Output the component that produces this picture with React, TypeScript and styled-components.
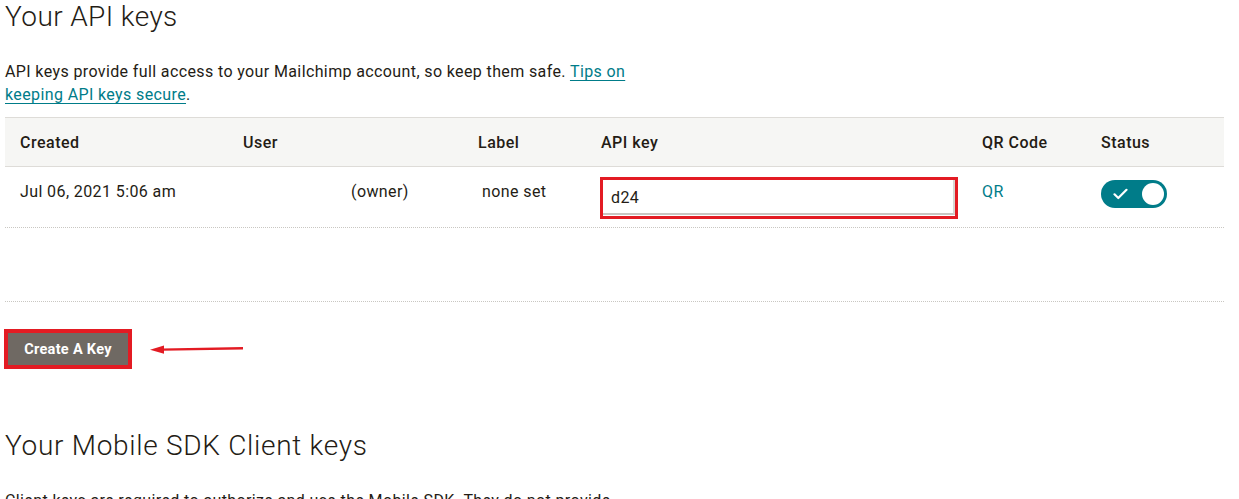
import styled, { createGlobalStyle } from 'styled-components';

const GlobalStyle = createGlobalStyle`
  body {
    margin: 0;
    background: #fff;
    font-family: Roboto, "Liberation Sans", Arial, sans-serif;
    color: #241c15;
  }
`;

const COLS = '223px 235px 123px 381px 119px 138px';

const Page = styled.div`
  padding-left: 5px;
  width: 1219px;
`;

const Title = styled.h1<{ $spacing?: number }>`
  margin: 0;
  font-size: 28px;
  line-height: 34px;
  font-weight: 300;
  letter-spacing: ${(p) => p.$spacing ?? 0.4}px;
  color: #241c15;
`;

const Intro = styled.p<{ $top: number }>`
  margin: ${(p) => p.$top}px 0 0;
  width: 640px;
  font-size: 16px;
  line-height: 23px;
  letter-spacing: 0.38px;
  color: #241c15;

  a {
    color: #007c89;
    text-decoration: underline;
    text-underline-offset: 3px;
  }
`;

const Table = styled.div`
  margin-top: 11px;
`;

const HeadRow = styled.div`
  display: grid;
  grid-template-columns: ${COLS};
  align-items: center;
  height: 48px;
  background: #f6f6f4;
  border-top: 1px solid #dedcd8;
  border-bottom: 1px solid #dedcd8;
`;

const HeadCell = styled.div`
  padding-left: 15px;
  font-size: 16px;
  font-weight: 500;
  letter-spacing: 0.5px;
  color: #241c15;
`;

const Row = styled.div<{ $h: number }>`
  display: grid;
  grid-template-columns: ${COLS};
  align-items: start;
  height: ${(p) => p.$h}px;
  border-bottom: 1px dotted #c9c7c2;
`;

const Cell = styled.div<{ $pad?: number }>`
  padding: 13px 0 0 ${(p) => p.$pad ?? 15}px;
  font-size: 16px;
  line-height: 24px;
  letter-spacing: 0.4px;
  color: #241c15;
`;

const KeyBox = styled.div`
  margin: 10px 0 0 14px;
  width: 352px;
  height: 36px;
  border: 3px solid #e31b23;
  box-sizing: content-box;
`;

const KeyInput = styled.div`
  height: 33px;
  background: #fff;
  border-bottom: 2px solid #c8c6c2;
  border-right: 2px solid #d8d6d2;
  padding-left: 8px;
  font-size: 16px;
  line-height: 36px;
  letter-spacing: 0.4px;
  color: #241c15;
`;

const QrLink = styled.a`
  color: #007c89;
  text-decoration: none;
`;

const Toggle = styled.div`
  margin: 13px 0 0 15px;
  width: 66px;
  height: 28px;
  border-radius: 14px;
  background: #007c89;
  display: flex;
  align-items: center;
  justify-content: space-between;
  padding: 0 3px 0 12px;
  box-sizing: border-box;
`;

const Knob = styled.span`
  width: 22px;
  height: 22px;
  border-radius: 50%;
  background: #fff;
`;

const ButtonRow = styled.div`
  display: flex;
  align-items: center;
  gap: 22px;
  margin: 31px 0 0 3px;
`;

const Button = styled.button`
  width: 120px;
  height: 32px;
  border: none;
  background: #6f6963;
  color: #fff;
  font-family: Roboto, "Liberation Sans", Arial, sans-serif;
  font-size: 14.5px;
  font-weight: 700;
  letter-spacing: 0.3px;
  outline: 4px solid #e31b23;
  cursor: pointer;
`;

const SubTitle = styled(Title)`
  margin-top: 64px;
`;

export default function App() {
  return (
    <>
      <GlobalStyle />
      <Page>
        <Title>Your API keys</Title>
        <Intro $top={26}>
          API keys provide full access to your Mailchimp account, so keep them safe.{' '}
          <a href="#">Tips on keeping API keys secure</a>.
        </Intro>

        <Table>
          <HeadRow>
            <HeadCell>Created</HeadCell>
            <HeadCell>User</HeadCell>
            <HeadCell>Label</HeadCell>
            <HeadCell>API key</HeadCell>
            <HeadCell>QR Code</HeadCell>
            <HeadCell>Status</HeadCell>
          </HeadRow>
          <Row $h={60}>
            <Cell>Jul 06, 2021 5:06 am</Cell>
            <Cell $pad={123}>(owner)</Cell>
            <Cell $pad={19}>none set</Cell>
            <KeyBox>
              <KeyInput>d24</KeyInput>
            </KeyBox>
            <Cell>
              <QrLink href="#">QR</QrLink>
            </Cell>
            <Toggle>
              <svg width="15" height="12" viewBox="0 0 15 12">
                <path d="M1.5 6.3 L5.3 10 L13.5 1.8" fill="none" stroke="#fff" strokeWidth="2.2" strokeLinecap="round" strokeLinejoin="round" />
              </svg>
              <Knob />
            </Toggle>
          </Row>
          <Row $h={73} />
        </Table>

        <ButtonRow>
          <Button>Create A Key</Button>
          <svg width="94" height="10" viewBox="0 0 94 10">
            <path d="M12 5.6 L93 4.2" stroke="#e31b23" strokeWidth="2.4" />
            <path d="M0 5.8 L14 1.5 L14 9.8 Z" fill="#e31b23" />
          </svg>
        </ButtonRow>

        <SubTitle $spacing={0.7}>Your Mobile SDK Client keys</SubTitle>
        <Intro $top={26}>
          Client keys are required to authorize and use the Mobile SDK. They do not provide
        </Intro>
      </Page>
    </>
  );
}
